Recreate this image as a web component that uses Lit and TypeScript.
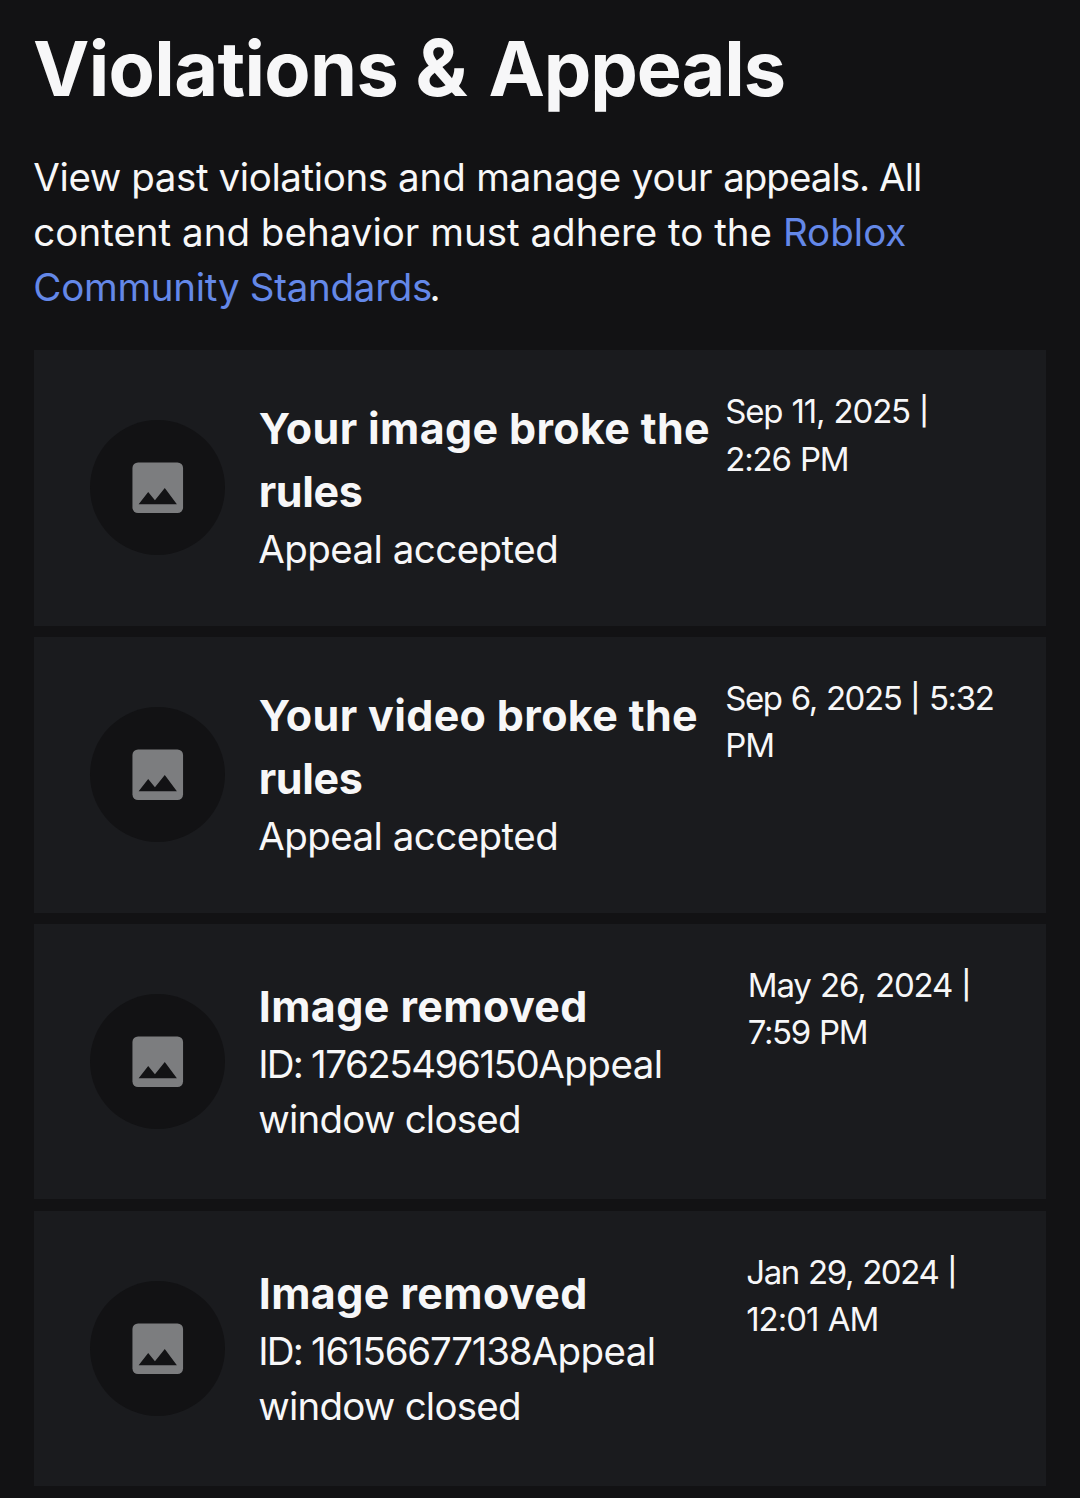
import { LitElement, html, css } from "lit";
import { customElement, property } from "lit/decorators.js";

interface Violation {
  title: string[];
  detail: string[];
  date: string[];
  kind: string;
}

const violations: Violation[] = [
  { title: ["Your image broke the", "rules"], detail: ["Appeal accepted"], date: ["Sep 11, 2025 |", "2:26 PM"], kind: "a" },
  { title: ["Your video broke the", "rules"], detail: ["Appeal accepted"], date: ["Sep 6, 2025 | 5:32", "PM"], kind: "b" },
  { title: ["Image removed"], detail: ["ID: 17625496150Appeal", "window closed"], date: ["May 26, 2024 |", "7:59 PM"], kind: "c" },
  { title: ["Image removed"], detail: ["ID: 16156677138Appeal", "window closed"], date: ["Jan 29, 2024 |", "12:01 AM"], kind: "d" },
];

@customElement("violation-card")
export class ViolationCard extends LitElement {
  @property({ attribute: false }) item!: Violation;

  static styles = css`
    :host { display: block; }
    .card {
      box-sizing: border-box;
      display: flex;
      height: 275.625px;
      padding-left: 56.25px;
      background: #1a1b1e;
      color: #f7f7f8;
    }
    .thumb {
      align-self: center;
      flex: none;
      display: flex;
      align-items: center;
      justify-content: center;
      width: 135px;
      height: 135px;
      border-radius: 50%;
      background: #121214;
    }
    .thumb svg { display: block; width: 67.5px; height: 67.5px; }
    .body { box-sizing: border-box; align-self: center; flex: none; padding-left: 33.5px; }
    .line { display: block; white-space: nowrap; }
    .title { font-weight: 700; font-size: 43px; line-height: 63px; letter-spacing: 0.35px; }
    .title .l1 { letter-spacing: -0.4px; }
    .detail { margin: -1px 0 1px -0.6px; font-size: 38.5px; line-height: 55px; letter-spacing: -0.54px; }
    .date { padding-top: 38px; font-size: 33px; line-height: 47.6px; letter-spacing: -1.2px; word-spacing: 1.2px; }
    .bar { font-size: 28px; font-weight: 500; line-height: 0; vertical-align: 2px; margin: 0 1px 0 0; }

    .c .title, .d .title { letter-spacing: 0.4px; }
    .c .detail .l1, .d .detail .l1 { letter-spacing: -0.77px; }
    .label { letter-spacing: -1.8px; }
    .c .number { letter-spacing: -1.48px; }
    .d .number { letter-spacing: -1.23px; }

    .a .date .l0 { letter-spacing: -1.2px; }
    .b .date .l0 { letter-spacing: -1.4px; }
    .c .date .l0 { letter-spacing: -1.15px; }
    .c .date .l1 { letter-spacing: -1.35px; }
    .d .date .l0 { letter-spacing: -1.4px; }
    .d .date .l1 { letter-spacing: -1.05px; }
    .a .body, .b .body { width: 500px; }
    .c .body { width: 522.5px; }
    .d .body { width: 521px; }
  `;

  private rows(lines: string[]) {
    return lines.map((l, i) => html`<span class="line l${i}">${this.parts(l)}</span>`);
  }

  private parts(line: string) {
    const id = /^(ID: )(\d+)(.*)$/.exec(line);
    if (id) return html`<span class="label">${id[1]}</span><span class="number">${id[2]}</span>${id[3]}`;
    const [head, ...tail] = line.split("|");
    return tail.length ? html`${head}<span class="bar">|</span>${tail[0]}` : line;
  }

  render() {
    const { title, detail, date, kind } = this.item;
    return html`
      <div class="card ${kind}">
        <div class="thumb">
          <svg viewBox="0 0 24 24" aria-hidden="true">
            <rect x="3" y="3" width="18" height="18" rx="2" fill="#7c7d7f" />
            <path fill="#121214" d="M8.6 13.5l2.4 2.9L14.5 12.1l4.3 5.8H5.2z" />
          </svg>
        </div>
        <div class="body">
          <div class="title">${this.rows(title)}</div>
          <div class="detail">${this.rows(detail)}</div>
        </div>
        <div class="date">${this.rows(date)}</div>
      </div>
    `;
  }
}

@customElement("app-root")
export class AppRoot extends LitElement {
  static styles = css`
    :host {
      display: block;
      box-sizing: border-box;
      height: 1498px;
      overflow: hidden;
      padding: 0 34px;
      background: #121214;
      color: #f7f7f8;
      font-family: Inter, "Liberation Sans", sans-serif;
    }
    h1 {
      margin: 0 0 0 -1px;
      padding-top: 21px;
      font-size: 75.6px;
      line-height: 96px;
      font-weight: 700;
      letter-spacing: -0.65px;
      white-space: nowrap;
    }
    .amp { font-size: 78px; line-height: 0; margin-right: 4px; }
    .end { letter-spacing: -1.1px; }
    .intro { margin: 33px 0 35px -0.7px; font-size: 38.5px; line-height: 55px; }
    .line { display: block; white-space: nowrap; }
    .first { letter-spacing: -0.15px; }
    .lead { letter-spacing: -0.4px; }
    .tight { letter-spacing: -0.98px; }
    .second { letter-spacing: 0.01px; }
    .third { letter-spacing: -0.28px; }
    .stop { margin-left: -2.5px; }
    .link { color: #6488e8; text-decoration: none; }
    .list { display: flex; flex-direction: column; gap: 11.25px; }
  `;

  render() {
    return html`
      <h1>Violations <span class="amp">&amp;</span> <span class="end">Appeals</span></h1>
      <p class="intro">
        <span class="line first"><span class="lead">View past violations </span>and manage your <span class="tight">appeals. All</span></span>
        <span class="line second">content and behavior must adhere to the <a class="link">Roblox</a></span>
        <span class="line third"><a class="link">Community Standards</a><span class="stop">.</span></span>
      </p>
      <div class="list">
        ${violations.map((v) => html`<violation-card .item=${v}></violation-card>`)}
      </div>
    `;
  }
}
